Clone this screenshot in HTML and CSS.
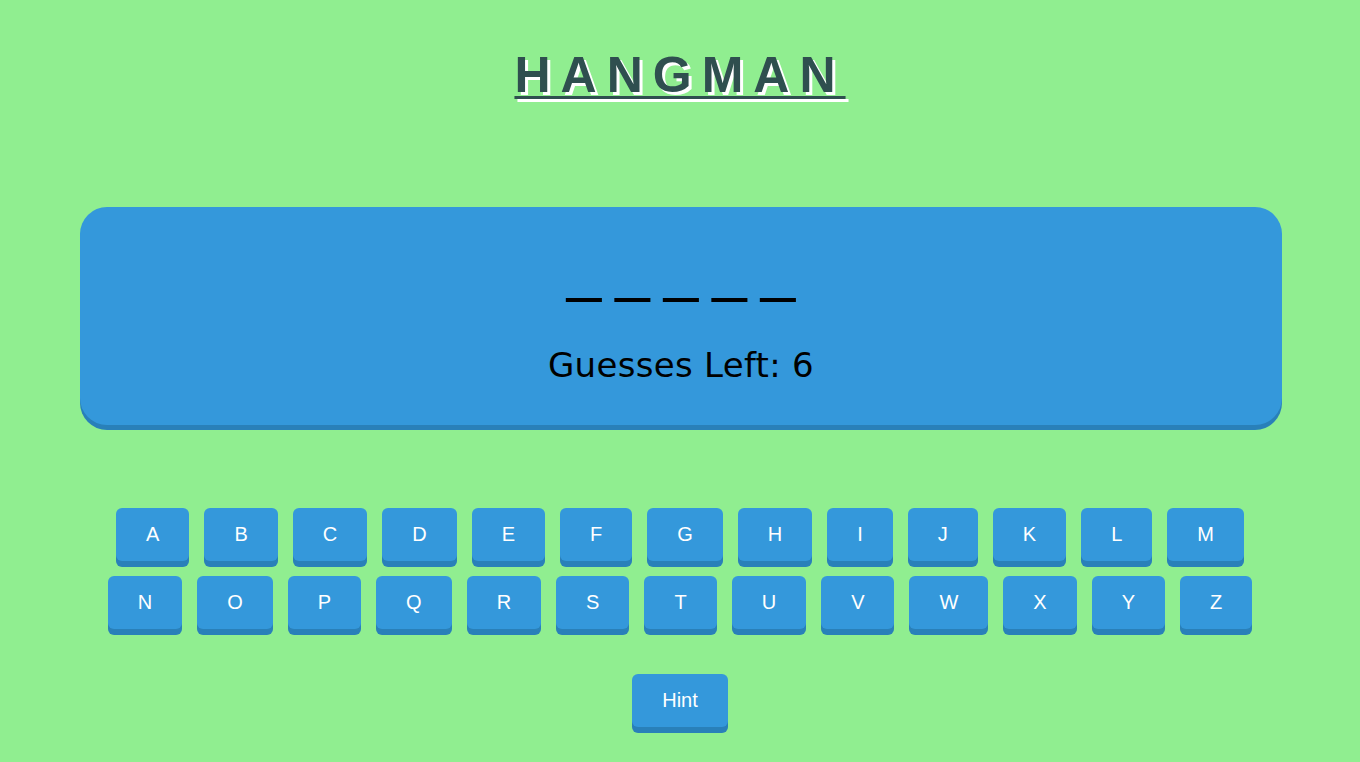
FILE: index.html
```html
<!DOCTYPE html>
<html>
<head>
<meta charset="utf-8">
<link rel="stylesheet" href="styles.css">
</head>
<body>
<h1 class="title">HANGMAN</h1>
<section class="board">
  <div class="word">_____</div>
  <div class="guesses">Guesses Left: 6</div>
</section>
<section class="keyboard">
  <div class="row">
    <button class="key">A</button><button class="key">B</button><button class="key">C</button><button class="key">D</button><button class="key">E</button><button class="key">F</button><button class="key">G</button><button class="key">H</button><button class="key">I</button><button class="key">J</button><button class="key">K</button><button class="key">L</button><button class="key">M</button>
  </div>
  <div class="row">
    <button class="key">N</button><button class="key">O</button><button class="key">P</button><button class="key">Q</button><button class="key">R</button><button class="key">S</button><button class="key">T</button><button class="key">U</button><button class="key">V</button><button class="key">W</button><button class="key">X</button><button class="key">Y</button><button class="key">Z</button>
  </div>
</section>
<div class="hint-wrap"><button class="key">Hint</button></div>
</body>
</html>
```

FILE: styles.css
```css
html, body {
  margin: 0;
  padding: 0;
}
body {
  background: #90ee90;
  font-family: "Liberation Sans", Arial, sans-serif;
  min-height: 762px;
}
.title {
  margin: 47px 0 0;
  text-align: center;
  font-family: "Liberation Sans", Arial, sans-serif;
  font-weight: bold;
  font-size: 50px;
  line-height: 57px;
  letter-spacing: 10px;
  color: #2f4f4f;
  text-decoration: underline;
  text-decoration-thickness: 3px;
  text-underline-offset: 4px;
  text-shadow: 3px 3px 0 #ffffff;
}
.board {
  box-sizing: border-box;
  width: 1202px;
  height: 218px;
  margin: 103px 0 0 80px;
  background: #3498db;
  border-radius: 27px;
  box-shadow: 0 5px 0 #2980b9;
  display: flex;
  flex-direction: column;
  align-items: center;
  padding-top: 31px;
}
.word {
  font-family: "Liberation Sans", Arial, sans-serif;
  font-size: 62px;
  line-height: 62px;
  color: #000;
  letter-spacing: 14px;
  margin-right: -14px;
}
.guesses {
  margin-top: 43px;
  font-family: "DejaVu Sans", sans-serif;
  font-size: 34px;
  line-height: 44px;
  color: #000;
  letter-spacing: 0.3px;
}
.keyboard {
  margin-top: 83px;
  display: flex;
  flex-direction: column;
  align-items: center;
  gap: 15px;
}
.row {
  display: flex;
  gap: 15px;
  justify-content: center;
}
.key {
  height: 53px;
  padding: 0 30px;
  border: none;
  border-radius: 6px;
  background: #3498db;
  color: #ffffff;
  font-family: "Liberation Sans", Arial, sans-serif;
  font-size: 20px;
  box-shadow: 0 6px 0 #2980b9;
  cursor: pointer;
}
.hint-wrap {
  margin-top: 45px;
  display: flex;
  justify-content: center;
}
```
